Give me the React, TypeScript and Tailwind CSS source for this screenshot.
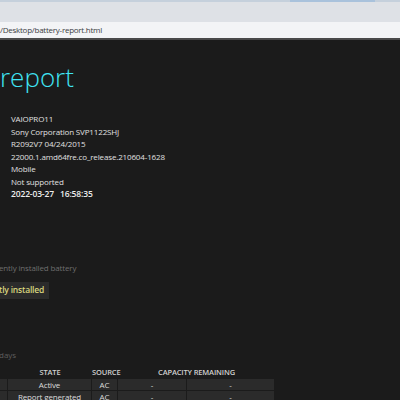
const INFO = [
  "VAIOPRO11",
  "Sony Corporation SVP1122SHJ",
  "R2092V7 04/24/2015",
  "22000.1.amd64fre.co_release.210604-1628",
  "Mobile",
  "Not supported",
];

const ROWS = [
  { state: "Active", source: "AC", a: "-", b: "-" },
  { state: "Report generated", source: "AC", a: "-", b: "-" },
];

export default function App() {
  return (
    <div
      className="w-[400px] h-[400px] overflow-hidden bg-[#1b1b1b] flex flex-col"
      style={{ fontFamily: '"Open Sans", "Noto Sans", sans-serif' }}
    >
      {/* browser chrome */}
      <div className="shrink-0 h-[2px] bg-[#c5d0dc] flex">
        <div className="ml-[290px] w-[85px] bg-[#a9c2dc]" />
      </div>
      <div className="shrink-0 h-[20px] bg-[#dee1e6]" />
      <div className="shrink-0 h-[16px] bg-[#f3f4f6] flex items-center text-[8px] text-[#3c4043] tracking-[-0.25px] whitespace-nowrap">
        /Desktop/battery-report.html
      </div>
      <div className="shrink-0 h-[2px] bg-[#4a4a4a]" />

      {/* page */}
      <div className="flex-1 min-h-0">
        <h1 className="text-[#3fe5f4] text-[26px] font-light leading-none mt-[24px] whitespace-nowrap">
          report
        </h1>

        <div className="mt-[23px] ml-[11px] flex flex-col text-[8px] text-[#e0e0e0] leading-[12.5px] tracking-[-0.15px] whitespace-nowrap">
          {INFO.map((t) => (
            <div key={t}>{t}</div>
          ))}
          <div className="font-semibold text-[8.5px] text-[#ededed] whitespace-pre">2022-03-27   16:58:35</div>
        </div>

        <div className="mt-[61px] text-[8px] leading-[12px] text-[#6e6e6e] -ml-[1px] tracking-[-0.15px] whitespace-nowrap">
          ently installed battery
        </div>
        <div className="mt-[8px] w-[50px] h-[17px] bg-[#2b2b2b] flex items-center text-[8.5px] font-semibold text-[#d8d57e] -ml-[1px] tracking-[-0.2px] whitespace-nowrap">
          tly installed
        </div>

        <div className="mt-[50px] text-[8px] leading-[12px] text-[#5e5e5e] -ml-[1px] whitespace-nowrap">days</div>

        <div className="mt-[6px] text-[8px] text-[#dcdcdc] tracking-[-0.15px] whitespace-nowrap">
          <div className="flex h-[12px] items-center font-semibold text-[#d0d0d0] text-[7.5px]">
            <div className="w-[8px]" />
            <div className="w-[84px] text-center">STATE</div>
            <div className="w-[26px] text-center">SOURCE</div>
            <div className="w-[157px] text-center">CAPACITY REMAINING</div>
          </div>
          {ROWS.map((r) => (
            <div key={r.state} className="flex h-[11px] mb-[1px] gap-[1px]">
              <div className="w-[7px] bg-[#2b2b2b]" />
              <div className="w-[83px] bg-[#2b2b2b] text-center leading-[11px]">{r.state}</div>
              <div className="w-[25px] bg-[#2b2b2b] text-center leading-[11px]">{r.source}</div>
              <div className="w-[68px] bg-[#2b2b2b] text-center leading-[11px]">{r.a}</div>
              <div className="w-[87px] bg-[#2b2b2b] text-center leading-[11px]">{r.b}</div>
            </div>
          ))}
        </div>
      </div>
    </div>
  );
}
